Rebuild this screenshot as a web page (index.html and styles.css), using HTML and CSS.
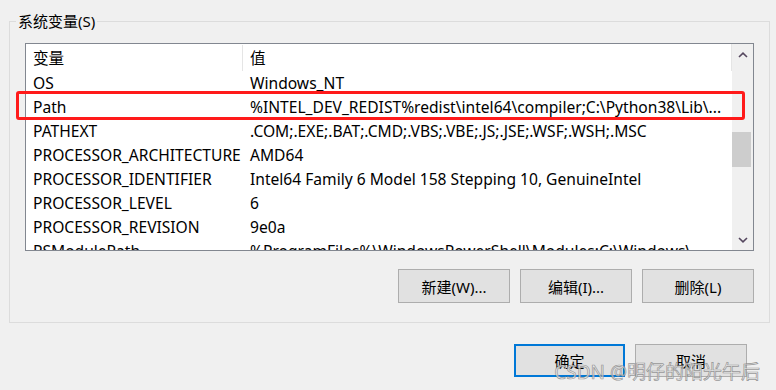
FILE: index.html
```html
<!DOCTYPE html>
<html lang="zh-CN">
<head>
<meta charset="utf-8">
<title>系统变量</title>
<link rel="stylesheet" href="styles.css">
</head>
<body>
<div class="dialog">
  <fieldset class="group">
    <legend class="group-title">系统变量(S)</legend>
    <div class="listbox">
      <div class="list-content">
        <div class="list-header">
          <div class="hcell hcell-name">变量</div>
          <div class="hcell hcell-value">值</div>
        </div>
        <div class="row"><div class="cell name">OS</div><div class="cell value">Windows_NT</div></div>
        <div class="row"><div class="cell name">Path</div><div class="cell value">%INTEL_DEV_REDIST%redist\intel64\compiler;C:\Python38\Lib\...</div></div>
        <div class="row"><div class="cell name">PATHEXT</div><div class="cell value">.COM;.EXE;.BAT;.CMD;.VBS;.VBE;.JS;.JSE;.WSF;.WSH;.MSC</div></div>
        <div class="row"><div class="cell name">PROCESSOR_ARCHITECTURE</div><div class="cell value">AMD64</div></div>
        <div class="row"><div class="cell name">PROCESSOR_IDENTIFIER</div><div class="cell value">Intel64 Family 6 Model 158 Stepping 10, GenuineIntel</div></div>
        <div class="row"><div class="cell name">PROCESSOR_LEVEL</div><div class="cell value">6</div></div>
        <div class="row"><div class="cell name">PROCESSOR_REVISION</div><div class="cell value">9e0a</div></div>
        <div class="row"><div class="cell name">PSModulePath</div><div class="cell value">%ProgramFiles%\WindowsPowerShell\Modules;C:\Windows\...</div></div>
      </div>
      <div class="scrollbar">
        <div class="sb-arrow">
          <svg width="10" height="6" viewBox="0 0 10 6"><path d="M1 5 L5 1.2 L9 5" fill="none" stroke="#55475f" stroke-width="1.6"/></svg>
        </div>
        <div class="sb-track"><div class="sb-thumb"></div></div>
        <div class="sb-arrow">
          <svg width="10" height="6" viewBox="0 0 10 6"><path d="M1 1 L5 4.8 L9 1" fill="none" stroke="#55475f" stroke-width="1.6"/></svg>
        </div>
      </div>
    </div>
    <div class="group-buttons">
      <button class="btn">新建(W)...</button>
      <button class="btn">编辑(I)...</button>
      <button class="btn">删除(L)</button>
    </div>
  </fieldset>
  <div class="dialog-buttons">
    <button class="btn btn-default">确定</button>
    <button class="btn">取消</button>
  </div>
  <div class="highlight"></div>
  <div class="watermark">CSDN @明仔的阳光午后</div>
</div>
</body>
</html>
```

FILE: styles.css
```css
* { box-sizing: border-box; }
html, body {
  margin: 0;
  padding: 0;
  background: #f0f0f0;
}
body {
  width: 776px;
  height: 390px;
  overflow: hidden;
  font-family: "Noto Sans", "Noto Sans CJK SC", sans-serif;
  font-size: 15px;
  color: #000;
}
.dialog {
  position: relative;
  width: 776px;
  height: 390px;
  padding-top: 11px;
}
.group {
  margin: 0 0 0 9px;
  width: 761px;
  height: 312px;
  border: 1px solid #dcdcdc;
  padding: 0 15px 0 15px;
}
.group-title {
  padding: 0 2px;
  margin-left: -9px;
  line-height: 20px;
  height: 20px;
  font-size: 15px;
}
.listbox {
  margin-top: 12px;
  width: 729px;
  height: 208px;
  border: 1px solid #828790;
  background: #fff;
  display: flex;
  font-size: 15.6px;
}
.list-content {
  width: 706px;
  height: 206px;
  overflow: hidden;
}
.list-header {
  display: flex;
  height: 27px;
  align-items: stretch;
}
.hcell {
  display: flex;
  align-items: center;
  padding-left: 7px;
  line-height: 20px;
}
.hcell-name {
  width: 217px;
  border-right: 1px solid #e5e5e5;
  margin: 1px 0 0 0;
}
.hcell-value {
  width: 489px;
  border-right: 1px solid #e5e5e5;
}
.row {
  display: flex;
  height: 24px;
  align-items: center;
  white-space: nowrap;
}
.cell {
  padding-left: 7px;
  line-height: 20px;
  overflow: hidden;
}
.cell.name { width: 217px; }
.cell.value { width: 489px; }
.scrollbar {
  width: 21px;
  height: 206px;
  background: #f0f0f0;
  display: flex;
  flex-direction: column;
}
.sb-arrow {
  height: 21px;
  display: flex;
  align-items: center;
  justify-content: center;
}
.sb-track {
  flex: 1;
  padding-top: 67px;
}
.sb-thumb {
  width: 19px;
  height: 35px;
  background: #cdcdcd;
}
.group-buttons {
  display: flex;
  justify-content: flex-end;
  gap: 10px;
  margin-top: 18px;
}
.btn {
  font-family: "Noto Sans", "Noto Sans CJK SC", sans-serif;
  font-size: 15px;
  width: 112px;
  height: 34px;
  background: #e1e1e1;
  border: 1px solid #adadad;
  color: #000;
  padding: 0;
  margin: 0;
}
.dialog-buttons {
  display: flex;
  justify-content: flex-end;
  gap: 10px;
  margin-top: 21px;
  padding-right: 29px;
}
.dialog-buttons .btn {
  height: 33px;
}
.btn-default {
  width: 111px;
  border: 2px solid #0078d7;
}
.highlight {
  position: absolute;
  left: 16px;
  top: 91px;
  width: 729px;
  height: 29px;
  border: 3px solid #ff1a1a;
  border-radius: 3px;
}
.watermark {
  position: absolute;
  right: 16px;
  top: 360px;
  font-family: "Noto Sans", "Noto Sans CJK SC", sans-serif;
  font-size: 19px;
  line-height: 24px;
  color: rgba(235, 235, 235, 0.75);
  -webkit-text-stroke: 0.7px rgba(120, 120, 120, 0.75);
  white-space: nowrap;
}
```
